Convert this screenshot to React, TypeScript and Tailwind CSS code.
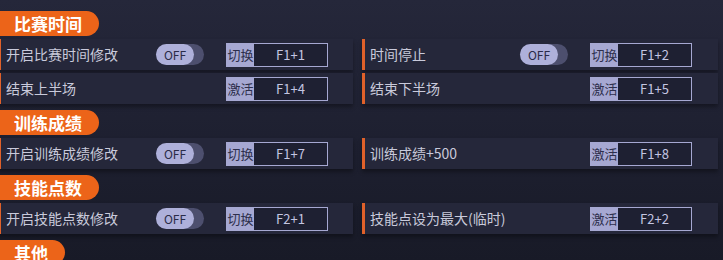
import React from 'react'

type Item = { label: string; kind: 'toggle' | 'activate'; key: string }
type Section = { title: string; rows: Item[] }

const sections: Section[] = [
  {
    title: '比赛时间',
    rows: [
      { label: '开启比赛时间修改', kind: 'toggle', key: 'F1+1' },
      { label: '时间停止', kind: 'toggle', key: 'F1+2' },
      { label: '结束上半场', kind: 'activate', key: 'F1+4' },
      { label: '结束下半场', kind: 'activate', key: 'F1+5' },
    ],
  },
  {
    title: '训练成绩',
    rows: [
      { label: '开启训练成绩修改', kind: 'toggle', key: 'F1+7' },
      { label: '训练成绩+500', kind: 'activate', key: 'F1+8' },
    ],
  },
  {
    title: '技能点数',
    rows: [
      { label: '开启技能点数修改', kind: 'toggle', key: 'F2+1' },
      { label: '技能点设为最大(临时)', kind: 'activate', key: 'F2+2' },
    ],
  },
  { title: '其他', rows: [] },
]

function Toggle() {
  return (
    <div className="relative w-[48px] h-[21px] rounded-full bg-[#4d4f6e]">
      <div className="absolute left-0 top-0 h-[21px] w-[38px] rounded-full bg-[#aeb0da] flex items-center justify-center text-[12px] text-[#2a2c48] leading-none">
        OFF
      </div>
    </div>
  )
}

function HotkeyBox({ kind, hotkey }: { kind: Item['kind']; hotkey: string }) {
  return (
    <div className="flex h-[24px] w-[102px] border border-[#a6a8d2] bg-[#1e2032]">
      <div className="w-[27px] bg-[#a6a8d2] text-[#2d2f4c] text-[13px] flex items-center justify-center leading-none">
        {kind === 'toggle' ? '切换' : '激活'}
      </div>
      <div className="flex-1 flex items-center justify-center text-[13px] text-[#c4c6e2] leading-none">
        {hotkey}
      </div>
    </div>
  )
}

function Row({ item }: { item: Item }) {
  return (
    <div className="flex items-center h-[31px] bg-[#25273a] border-l-[3px] border-[#e0612a] shadow-[0_3px_4px_rgba(0,0,0,0.35)]">
      <span className="w-[155px] pl-[5px] text-[14px] text-[#c9cadb] whitespace-nowrap">{item.label}</span>
      <div className="w-[70px]">{item.kind === 'toggle' && <Toggle />}</div>
      <HotkeyBox kind={item.kind} hotkey={item.key} />
    </div>
  )
}

export default function App() {
  return (
    <div
      className="w-[723px] h-[260px] overflow-hidden bg-[linear-gradient(180deg,#25273a_0%,#1f2132_45%,#181a27_100%)] pt-[11px]"
      style={{ fontFamily: '"Noto Sans CJK SC", "Noto Sans", sans-serif' }}
    >
      <div className="flex flex-col ml-[-2px]">
        {sections.map((s, i) => (
          <div key={s.title} className={i > 0 ? 'mt-[6px]' : ''}>
            <div className="h-[25px] w-fit pl-[16px] pr-[17px] rounded-r-full bg-[#ec6419] text-white font-bold text-[17px] leading-[25px]">
              {s.title}
            </div>
            {s.rows.length > 0 && (
              <div className="grid grid-cols-[355px_356px] gap-x-[9px] gap-y-[3px] mt-[3px]">
                {s.rows.map((r) => (
                  <Row key={r.label} item={r} />
                ))}
              </div>
            )}
          </div>
        ))}
      </div>
    </div>
  )
}
